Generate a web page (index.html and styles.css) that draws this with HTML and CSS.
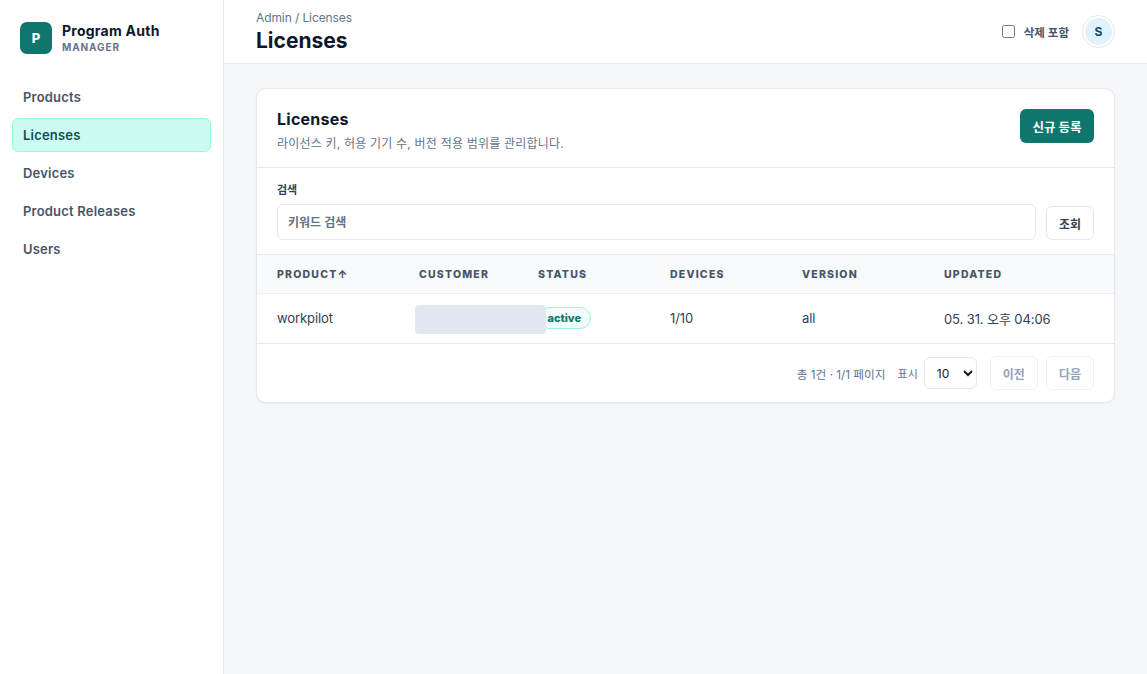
FILE: index.html
```html
<!DOCTYPE html>
<html lang="ko">
<head>
    <meta charset="UTF-8">
    <meta name="viewport" content="width=device-width, initial-scale=1.0">
    <title>Program Auth Manager - Licenses</title>
    <link rel="stylesheet" href="styles.css">
</head>
<body>
    <aside class="sidebar">
        <div class="brand">
            <div class="brand-logo">P</div>
            <div>
                <div class="brand-name">Program Auth</div>
                <div class="brand-sub">MANAGER</div>
            </div>
        </div>
        <nav class="nav">
            <a class="nav-item" href="#">Products</a>
            <a class="nav-item active" href="#">Licenses</a>
            <a class="nav-item" href="#">Devices</a>
            <a class="nav-item" href="#">Product Releases</a>
            <a class="nav-item" href="#">Users</a>
        </nav>
    </aside>

    <div class="main">
        <header class="topbar">
            <div>
                <div class="breadcrumb">Admin / Licenses</div>
                <h1 class="page-title">Licenses</h1>
            </div>
            <div class="topbar-right">
                <label class="deleted-toggle">
                    <input type="checkbox" class="deleted-check">
                    <span>삭제 포함</span>
                </label>
                <div class="avatar">S</div>
            </div>
        </header>

        <main class="content">
            <section class="card">
                <div class="card-head">
                    <div>
                        <h2 class="card-title">Licenses</h2>
                        <p class="card-desc">라이선스 키, 허용 기기 수, 버전 적용 범위를 관리합니다.</p>
                    </div>
                    <button class="btn-primary">신규 등록</button>
                </div>

                <form class="filter">
                    <label class="filter-label" for="keyword">검색</label>
                    <div class="filter-row">
                        <input type="text" id="keyword" class="filter-input" placeholder="키워드 검색">
                        <button type="button" class="btn">조회</button>
                    </div>
                </form>

                <table class="table">
                    <colgroup>
                        <col class="col-product">
                        <col class="col-customer">
                        <col class="col-status">
                        <col class="col-devices">
                        <col class="col-version">
                        <col>
                    </colgroup>
                    <thead>
                        <tr>
                            <th>PRODUCT↑</th>
                            <th>CUSTOMER</th>
                            <th>STATUS</th>
                            <th>DEVICES</th>
                            <th>VERSION</th>
                            <th>UPDATED</th>
                        </tr>
                    </thead>
                    <tbody>
                        <tr>
                            <td>workpilot</td>
                            <td class="customer-cell"><div class="redacted"></div></td>
                            <td><span class="badge">active</span></td>
                            <td>1/10</td>
                            <td>all</td>
                            <td>05. 31. 오후 04:06</td>
                        </tr>
                    </tbody>
                </table>

                <div class="pager">
                    <span class="pager-info">총 1건 · 1/1 페이지</span>
                    <label class="pager-size">
                        <span>표시</span>
                        <select class="size-select">
                            <option>10</option>
                        </select>
                    </label>
                    <button class="btn btn-disabled" disabled>이전</button>
                    <button class="btn btn-disabled" disabled>다음</button>
                </div>
            </section>
        </main>
    </div>
</body>
</html>
```

FILE: styles.css
```css
* {
    box-sizing: border-box;
}
body {
    font-family: Inter, "Noto Sans CJK KR", sans-serif;
    background-color: #f5f7fa;
    color: #334155;
    margin: 0;
    height: 100vh;
    display: flex;
    overflow: hidden;
}

/* sidebar */
.sidebar {
    width: 224px;
    flex-shrink: 0;
    background-color: white;
    border-right: 1px solid #e2e8f0;
    padding: 22px 12px;
}
.brand {
    display: flex;
    align-items: center;
    gap: 10px;
    padding: 0 8px;
    margin-bottom: 26px;
}
.brand-logo {
    width: 32px;
    height: 32px;
    border-radius: 7px;
    background-color: #0f766e;
    color: white;
    font-size: 13px;
    font-weight: 800;
    display: flex;
    align-items: center;
    justify-content: center;
}
.brand-name {
    font-size: 14px;
    font-weight: 700;
    line-height: 18px;
    letter-spacing: 0.25px;
    color: #0f172a;
}
.brand-sub {
    font-size: 10px;
    font-weight: 700;
    line-height: 14px;
    letter-spacing: 0.9px;
    color: #64748b;
}
.nav {
    display: flex;
    flex-direction: column;
    gap: 4px;
}
.nav-item {
    height: 34px;
    padding: 0 10px;
    border: 1px solid transparent;
    border-radius: 6px;
    display: flex;
    align-items: center;
    font-size: 13px;
    font-weight: 600;
    letter-spacing: 0.2px;
    color: #475569;
    text-decoration: none;
}
.nav-item.active {
    background-color: #ccfbf1;
    border-color: #99f6e4;
    color: #134e4a;
}

/* top bar */
.main {
    flex: 1;
    min-width: 0;
}
.topbar {
    height: 64px;
    background-color: white;
    border-bottom: 1px solid #e2e8f0;
    padding: 0 32px;
    display: flex;
    justify-content: space-between;
    align-items: center;
}
.breadcrumb {
    font-size: 12px;
    line-height: 16px;
    letter-spacing: -0.1px;
    color: #64748b;
}
.page-title {
    margin: 2px 0 0;
    font-size: 21px;
    font-weight: 700;
    line-height: 26px;
    color: #0f172a;
}
.topbar-right {
    display: flex;
    align-items: center;
    gap: 13px;
}
.deleted-toggle {
    display: flex;
    align-items: center;
    gap: 9px;
    font-size: 11.5px;
    font-weight: 600;
    color: #475569;
}
.deleted-check {
    width: 13px;
    height: 13px;
    margin: 0;
}
.avatar {
    width: 33px;
    height: 33px;
    padding: 2px;
    border-radius: 50%;
    background-color: #e0f2fe;
    background-clip: content-box;
    border: 1px solid #e2e8f0;
    color: #0c4a6e;
    font-size: 12px;
    font-weight: 700;
    display: flex;
    align-items: center;
    justify-content: center;
}

/* card */
.content {
    padding: 24px 32px;
}
.card {
    background-color: white;
    border: 1px solid #e2e8f0;
    border-radius: 10px;
    box-shadow: 0 1px 2px rgba(15, 23, 42, 0.05);
    overflow: hidden;
}
.card-head {
    height: 79px;
    padding: 19px 20px 0;
    border-bottom: 1px solid #e2e8f0;
    display: flex;
    justify-content: space-between;
    align-items: flex-start;
}
.card-title {
    margin: 0;
    font-size: 16px;
    font-weight: 700;
    line-height: 22px;
    letter-spacing: 0.25px;
    color: #0f172a;
}
.card-desc {
    margin: 5px 0 0;
    font-size: 12px;
    line-height: 18px;
    letter-spacing: 0.2px;
    color: #64748b;
}
.btn-primary {
    height: 34px;
    margin-top: 1px;
    padding: 0 12.5px;
    background-color: #0f766e;
    border: none;
    border-radius: 6px;
    color: white;
    font-family: inherit;
    font-size: 12.5px;
    font-weight: 700;
}
.btn {
    height: 34px;
    padding: 0 12px;
    background-color: white;
    border: 1px solid #e2e8f0;
    border-radius: 6px;
    color: #334155;
    font-family: inherit;
    font-size: 12px;
    font-weight: 700;
}
.btn-disabled {
    color: #94a3b8;
    border-color: #eef2f6;
}

/* filter */
.filter {
    height: 86px;
    padding: 15px 20px 0;
}
.filter-label {
    display: block;
    font-size: 11px;
    font-weight: 600;
    line-height: 15px;
    color: #334155;
    margin-bottom: 6px;
}
.filter-row {
    display: flex;
    align-items: flex-end;
    gap: 10px;
}
.filter-input {
    flex: 1;
    height: 36px;
    padding: 0 10px;
    border: 1px solid #e2e8f0;
    border-radius: 6px;
    font-family: inherit;
    font-size: 12px;
    font-weight: 600;
}
.filter-input::placeholder {
    color: #6b7280;
}

/* table */
.table {
    width: 100%;
    border-collapse: collapse;
    table-layout: fixed;
}
.col-product {
    width: 142px;
}
.col-customer {
    width: 119px;
}
.col-status,
.col-devices {
    width: 132px;
}
.col-version {
    width: 142px;
}
.table th {
    height: 39px;
    padding: 0 20px;
    background-color: #f8fafc;
    border-top: 1px solid #e2e8f0;
    border-bottom: 1px solid #edf1f6;
    text-align: left;
    font-size: 10.5px;
    font-weight: 800;
    letter-spacing: 1.2px;
    color: #475569;
}
.table td {
    height: 50px;
    padding: 0 20px 1px;
    border-bottom: 1px solid #e2e8f0;
    font-size: 13px;
    letter-spacing: -0.1px;
    color: #334155;
}
.customer-cell {
    position: relative;
}
.redacted {
    position: absolute;
    left: 16px;
    top: 11px;
    width: 131px;
    height: 29px;
    border-radius: 4px;
    background-color: #e2e8f0;
}
.badge {
    display: inline-block;
    height: 22px;
    padding: 0 8.5px;
    border: 1px solid #99f6e4;
    border-radius: 11px;
    background-color: #f0fdfa;
    color: #0f766e;
    font-size: 11px;
    font-weight: 800;
    letter-spacing: 0;
    line-height: 20px;
}

/* pager */
.pager {
    height: 58px;
    padding: 0 20px;
    display: flex;
    justify-content: flex-end;
    align-items: center;
    gap: 8px;
    font-size: 11px;
    color: #64748b;
}
.pager-info {
    font-size: 11.7px;
}
.pager-size {
    display: flex;
    align-items: center;
    gap: 6px;
    margin-left: 4px;
    margin-right: 5px;
}
.size-select {
    width: 53px;
    height: 32px;
    padding: 0 8px;
    border: 1px solid #e2e8f0;
    border-radius: 6px;
    background-color: white;
    color: #0f172a;
    font-family: inherit;
    font-size: 12px;
}
```
